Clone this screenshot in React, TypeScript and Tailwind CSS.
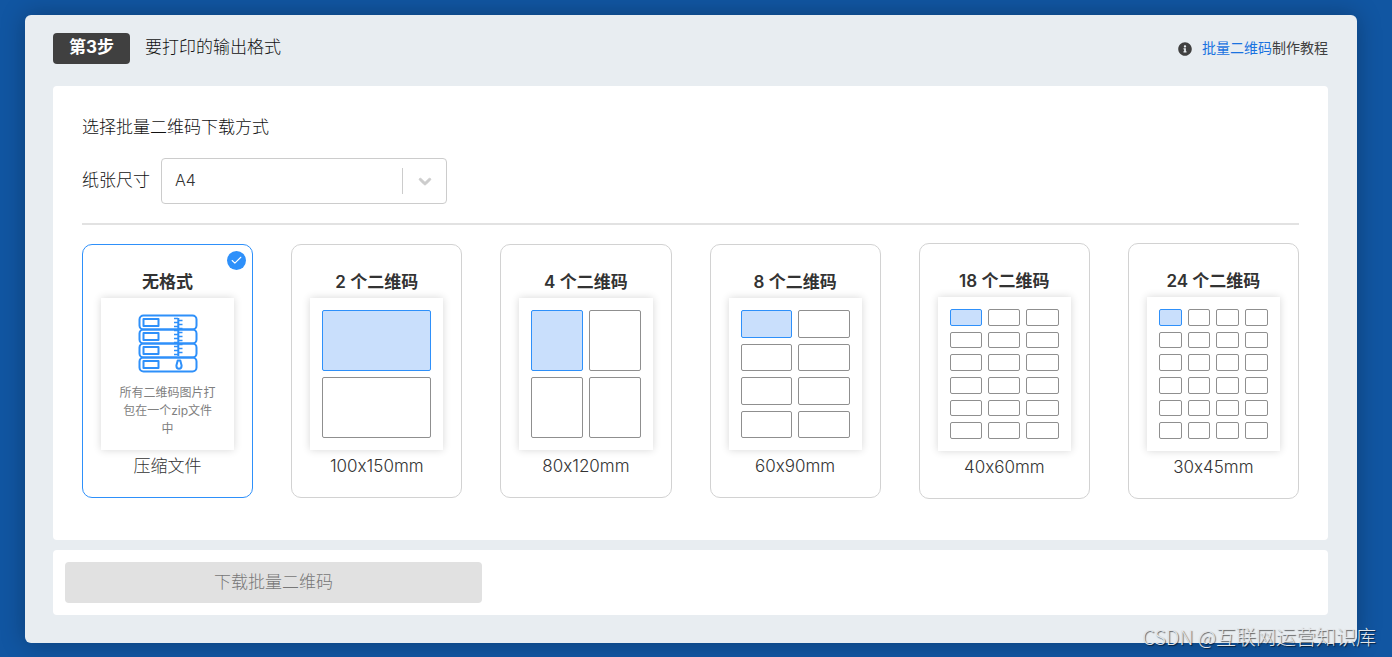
import React, { useState } from "react";
import { FaInfoCircle } from "react-icons/fa";
import { Check } from "lucide-react";

interface Layout {
    id: string;
    title: string;
    size: string;
    cells: number;
    grid: string;
}

const layouts: Layout[] = [
    { id: "zip", title: "无格式", size: "压缩文件", cells: 0, grid: "" },
    { id: "2", title: "2 个二维码", size: "100x150mm", cells: 2, grid: "h-[152px] grid-cols-1" },
    { id: "4", title: "4 个二维码", size: "80x120mm", cells: 4, grid: "h-[152px] grid-cols-2" },
    { id: "8", title: "8 个二维码", size: "60x90mm", cells: 8, grid: "h-[152px] grid-cols-2" },
    { id: "18", title: "18 个二维码", size: "40x60mm", cells: 18, grid: "h-[154px] grid-cols-3" },
    { id: "24", title: "24 个二维码", size: "30x45mm", cells: 24, grid: "h-[154px] grid-cols-4" },
];

const ZipIcon = () => (
    <svg width="60" height="60" viewBox="0 0 60 60" fill="none" stroke="#2e90fa" strokeWidth="2" strokeLinejoin="round" aria-hidden="true">
        {[1, 15, 29, 43].map((y) => (
            <g key={y}>
                <rect x="1.5" y={y + 0.5} width="57" height="14" rx="4" />
                <rect x="5.5" y={y + 4} width="15" height="7" />
            </g>
        ))}
        <path d="M40.3 4v38" strokeWidth="2" />
        <path d="M36 4.5h4M40.5 6.5h4M36 8.5h4M40.5 10.5h4M36 12.5h4M40.5 14.5h4M36 16.5h4M40.5 18.5h4M36 20.5h4M40.5 22.5h4M36 24.5h4M40.5 26.5h4M36 28.5h4M40.5 30.5h4M36 32.5h4M40.5 34.5h4M36 36.5h4M40.5 38.5h4M36 40.5h4" strokeWidth="1.5" />
        <path d="M39.7 46.5h2.6l1.3 5c0 4.4-5.2 4.4-5.2 0z" />
    </svg>
);

const Sheet = ({ layout }: { layout: Layout }) => {
    if (layout.cells === 0) {
        return (
            <div className="flex h-[152px] flex-col items-center bg-white px-[18px] pt-4 shadow-[0_0_8px_rgba(0,0,0,0.16)]">
                <ZipIcon />
                <p className="mt-2.5 text-center text-xs leading-[18px] font-normal text-[#808080]">所有二维码图片打包在一个zip文件中</p>
            </div>
        );
    }

    return (
        <div className={`grid auto-rows-fr gap-1.5 bg-white p-3 shadow-[0_0_8px_rgba(0,0,0,0.16)] ${layout.grid}`}>
            {Array.from({ length: layout.cells }, (_, i) => (
                <span key={i} className={`rounded-xs border ${i === 0 ? "border-[#2e90fa] bg-[#c9dffc]" : "border-[#8f8f8f] bg-white"}`} />
            ))}
        </div>
    );
};

const App = () => {
    const [selected, setSelected] = useState("zip");
    const [paper, setPaper] = useState("A4");

    return (
        <div className="relative min-h-screen bg-[#1156a2] pt-[15px] pr-[35px] pb-3.5 pl-[25px] font-[Inter,'Noto_Sans_CJK_SC',sans-serif] text-[17px] leading-6 font-light text-[#111] [font-feature-settings:'calt'_0]">
            <main className="rounded-md bg-[#e8edf1] pt-[18px] pr-[29px] pb-7 pl-7 shadow-[0_0_24px_rgba(0,0,0,0.28)]">
                <header className="mb-[22px] flex items-center justify-between">
                    <div className="flex items-center gap-[15px]">
                        <span className="flex h-[31px] items-center rounded-[4px] bg-[#404040] px-4 pb-1 font-bold text-white">第3步</span>
                        <h1 className="pb-1">要打印的输出格式</h1>
                    </div>
                    <div className="flex items-center gap-2.5 text-sm font-normal text-[#404040]">
                        <FaInfoCircle size={14} />
                        <span className="pb-0.5">
                            <a href="#" className="text-[#1a73e0]">批量二维码</a>制作教程
                        </span>
                    </div>
                </header>

                <section className="rounded-[4px] bg-white px-[29px] pt-[29px] pb-[41px]">
                    <h2 className="mb-[19px]">选择批量二维码下载方式</h2>
                    <div className="flex items-center gap-[11px]">
                        <label htmlFor="paper" className="pb-0.5">纸张尺寸</label>
                        <div className="relative w-[286px]">
                            <select id="paper" value={paper} onChange={(e) => setPaper(e.target.value)} className="h-[46px] w-full appearance-none rounded-[4px] border border-[#ccc] bg-white px-[13px] pb-0.5 text-base text-[#333]">
                                <option value="A4">A4</option>
                            </select>
                            <div className="pointer-events-none absolute inset-y-2.5 right-0 flex w-[45px] items-center justify-center border-l border-[#ccc]">
                                <svg width="20" height="20" viewBox="0 0 20 20" fill="#ccc" stroke="#ccc" strokeWidth="0.8" aria-hidden="true">
                                    <path d="M4.516 7.548c0.436-0.446 1.043-0.481 1.576 0l3.908 3.747 3.908-3.747c0.533-0.481 1.141-0.446 1.574 0 0.436 0.445 0.408 1.197 0 1.615-0.406 0.418-4.695 4.502-4.695 4.502-0.217 0.223-0.502 0.335-0.787 0.335s-0.57-0.112-0.789-0.335c0 0-4.287-4.084-4.695-4.502s-0.436-1.17 0-1.615z" />
                                </svg>
                            </div>
                        </div>
                    </div>
                    <hr className="mt-[19px] mb-[18px] border-t-2 border-[#e2e2e2]" />

                    <div className="grid grid-cols-6 items-center gap-[38px] text-[#333]">
                        {layouts.map((layout) => (
                            <label key={layout.id} className={`relative block cursor-pointer rounded-[10px] border px-[18px] pt-[25px] pb-[19px] text-center ${selected === layout.id ? "border-[#2e90fa]" : "border-[#d2d2d2]"}`}>
                                <input type="radio" name="layout" value={layout.id} checked={selected === layout.id} onChange={() => setSelected(layout.id)} className="sr-only" />
                                {selected === layout.id && (
                                    <span className="absolute top-1.5 right-1.5 flex size-[19px] items-center justify-center rounded-full bg-[#2e90fa] text-white">
                                        <Check size={13} strokeWidth={2} />
                                    </span>
                                )}
                                <div className="mb-1 font-semibold">{layout.title}</div>
                                <Sheet layout={layout} />
                                <div className="mt-1">{layout.size}</div>
                            </label>
                        ))}
                    </div>
                </section>

                <section className="mt-2.5 rounded-[4px] bg-white p-3">
                    <button type="button" disabled className="block h-[41px] w-1/3 rounded-[4px] bg-[#e1e1e1] pb-0.5 text-[#777]">下载批量二维码</button>
                </section>
            </main>

            <div className="absolute right-4 bottom-2 font-['Noto_Sans_CJK_SC',sans-serif] text-xl leading-6 text-[#e3e6e9] [text-shadow:1px_1px_1px_rgba(0,0,0,0.6)]">CSDN @互联网运营知识库</div>
        </div>
    );
};
export default App;
